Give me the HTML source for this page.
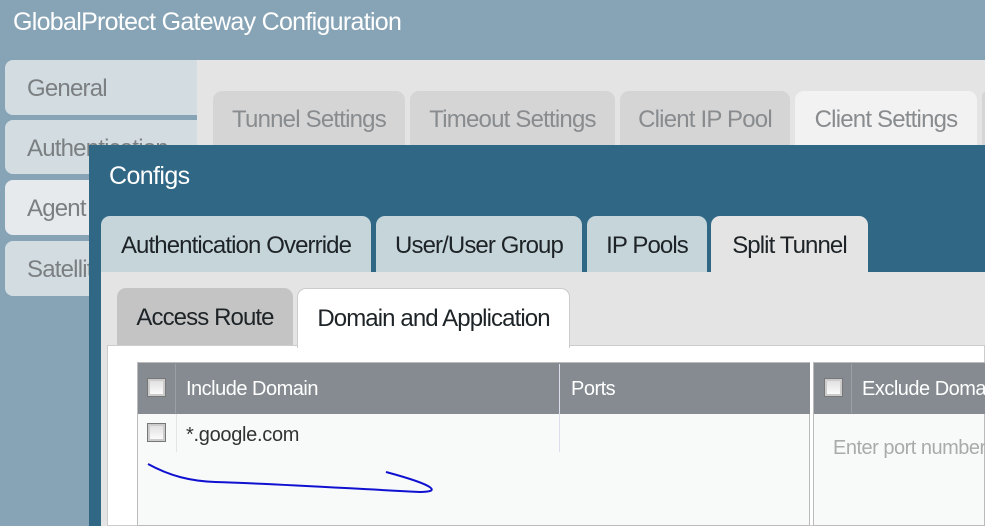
<!DOCTYPE html>
<html><head><style>
*{margin:0;padding:0;box-sizing:border-box}
body{width:985px;height:526px;overflow:hidden;background:#87a4b6;font-family:"Liberation Sans Narrow","Liberation Sans",sans-serif;position:relative}
.a{position:absolute;white-space:nowrap}
.lt{background:#d3dde1;border-radius:8px 0 0 8px;color:#7b7f82;font-size:24px;padding-left:22px;line-height:58px;letter-spacing:-0.8px}
.tt{background:#d5d5d5;border-radius:9px 9px 0 0;color:#888c8f;font-size:24px;text-align:center;line-height:58px;letter-spacing:-0.8px}
.dt{background:#c5d5da;border-radius:9px 9px 0 0;color:#1d2326;font-size:24px;text-align:center;line-height:60px;letter-spacing:-0.9px}
.cb{position:absolute;width:19px;height:19px;border:1px solid #777;background:linear-gradient(#ddd,#fff);box-shadow:inset 0 0 0 2px #ccc}
.hd{color:#fff;font-size:20px;letter-spacing:-0.5px}
</style></head><body>
<div class="a" style="left:13px;top:8px;color:#fff;font-size:25px;letter-spacing:-0.7px">GlobalProtect Gateway Configuration</div>
<div class="a" style="left:197px;top:60px;width:788px;height:100px;background:#e4e4e4"></div>
<div class="a lt" style="left:5px;top:60px;width:192px;height:55px">General</div>
<div class="a lt" style="left:5px;top:120px;width:192px;height:54px">Authentication</div>
<div class="a lt" style="left:5px;top:180px;width:100px;height:55px;background:#e6eaec">Agent</div>
<div class="a lt" style="left:5px;top:241px;width:100px;height:55px">Satellite</div>
<div class="a tt" style="left:213px;top:91px;width:192px;height:60px">Tunnel Settings</div>
<div class="a tt" style="left:410px;top:91px;width:205px;height:60px">Timeout Settings</div>
<div class="a tt" style="left:620px;top:91px;width:170px;height:60px">Client IP Pool</div>
<div class="a tt" style="left:795px;top:91px;width:182px;height:60px;background:#f2f2f2">Client Settings</div>
<div class="a tt" style="left:982px;top:91px;width:10px;height:60px"></div>
<div class="a" style="left:89px;top:145px;width:896px;height:381px;background:#2f6785"></div>
<div class="a" style="left:109px;top:162px;color:#fff;font-size:25px;letter-spacing:-0.6px">Configs</div>
<div class="a dt" style="left:101px;top:216px;width:270px;height:56px">Authentication Override</div>
<div class="a dt" style="left:376px;top:216px;width:206px;height:56px">User/User Group</div>
<div class="a dt" style="left:587px;top:216px;width:120px;height:56px">IP Pools</div>
<div class="a dt" style="left:711px;top:216px;width:157px;height:60px;background:#e4e4e4">Split Tunnel</div>
<div class="a" style="left:101px;top:272px;width:884px;height:254px;background:#e4e4e4"></div>
<div class="a" style="left:117px;top:288px;width:176px;height:58px;background:#c4c4c4;border-radius:9px 9px 0 0;color:#1d2326;font-size:24px;text-align:center;line-height:60px;letter-spacing:-0.9px">Access Route</div>
<div class="a" style="left:107px;top:345px;width:878px;height:181px;background:#fff;border:1px solid #ccc"></div>
<div class="a" style="left:297px;top:288px;width:273px;height:60px;background:#fff;border:1px solid #ccc;border-bottom:none;border-radius:9px 9px 0 0;color:#1d2326;font-size:24px;text-align:center;line-height:60px;letter-spacing:-0.9px">Domain and Application</div>
<div class="a" style="left:137px;top:362px;width:673px;height:164px;background:#f8fafa;border:1px solid #bbb"></div>
<div class="a" style="left:138px;top:363px;width:672px;height:51px;background:#858b90"></div>
<div class="a" style="left:175px;top:364px;width:1px;height:49px;background:#9aa0a4"></div>
<div class="a" style="left:559px;top:364px;width:1px;height:88px;background:#dde"></div>
<div class="cb" style="left:147px;top:378px"></div>
<div class="a hd" style="left:186px;top:378px">Include Domain</div>
<div class="a hd" style="left:571px;top:378px">Ports</div>
<div class="a" style="left:176px;top:414px;width:1px;height:38px;background:#e4e4e4"></div>
<div class="cb" style="left:147px;top:423px"></div>
<div class="a" style="left:186px;top:424px;font-size:20px;color:#333;letter-spacing:-0.3px">*.google.com</div>
<div class="a" style="left:813px;top:362px;width:172px;height:164px;background:#f8fafa;border:1px solid #bbb"></div>
<div class="a" style="left:814px;top:363px;width:171px;height:51px;background:#858b90"></div>
<div class="a" style="left:851px;top:364px;width:1px;height:49px;background:#9aa0a4"></div>
<div class="cb" style="left:824px;top:378px"></div>
<div class="a hd" style="left:862px;top:378px">Exclude Domain</div>
<div class="a" style="left:833px;top:437px;font-size:20px;color:#aaa;letter-spacing:-0.5px">Enter port number</div>
<svg class="a" style="left:0;top:0" width="985" height="526"><path d="M148 464 C170 476 190 481 215 482 C280 484 340 488 420 492 C440 492 438 486 386 472" fill="none" stroke="#1010d0" stroke-width="2"/></svg>
</body></html>
